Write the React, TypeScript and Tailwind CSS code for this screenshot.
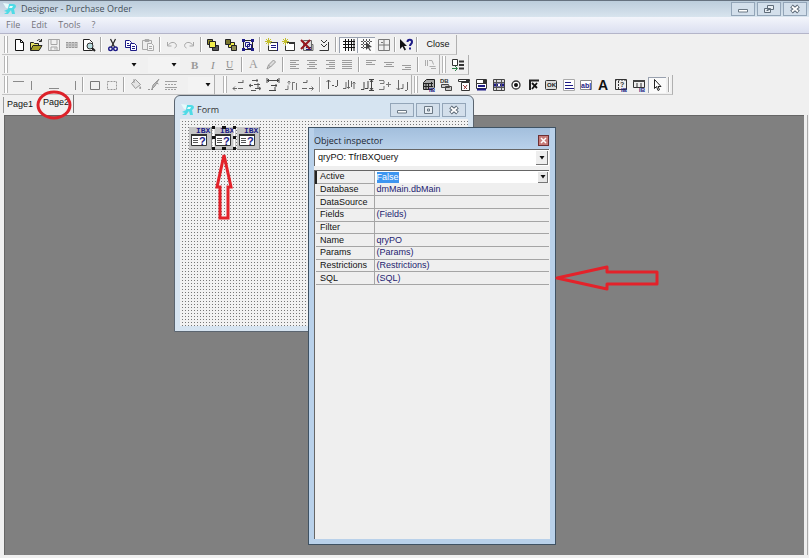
import { useState } from "react"
import type { ReactNode } from "react"
import clsx from "clsx"

const NAVY = "#1d1b86"

// every toolbar glyph is drawn on a 14x14 grid
const icons: Record<string, ReactNode> = {
  new: <path d="M3.5 1.5h5l3 3v8h-8z M8.5 1.5v3h3" fill="#fff" stroke="#111" />,
  open: (
    <>
      <path d="M1.5 12V4.5h3l1 1h4v2" fill="#e8e36a" stroke="#222" />
      <path d="M1.5 12.5l2.5-5h9l-3 5z" fill="#a8a12a" stroke="#222" />
      <path d="M8 3c1.500-2 3-1.500 4 0M12.500 1v2.500h-2.500" fill="none" stroke="#222" />
    </>
  ),
  save: <path d="M1.500 1.500h11v11h-11z M4 1.500v5h6v-5 M4 12.500v-3.500h6v3.500 M8 9.500v2" fill="none" stroke="#a5a5a5" />,
  print: (
    <>
      <path d="M1 4h12v6H1z" fill="#c4c4c4" />
      <path d="M1 4.500h12M1 7h12M1 9.500h12" stroke="#999" strokeDasharray="2 1" />
    </>
  ),
  preview: (
    <>
      <path d="M1.500 1.500h6l3 3v8h-9z" fill="#fff" stroke="#222" />
      <circle cx="8" cy="8" r="3" fill="#b9dde0" stroke="#333" />
      <path d="M10 10l3 3" stroke="#222" strokeWidth="2" />
    </>
  ),
  cut: (
    <>
      <path d="M4.500 1l4 8M9.500 1l-4 8" stroke="#222" strokeWidth="1.200" fill="none" />
      <circle cx="4.500" cy="10.800" r="1.800" fill="none" stroke={NAVY} strokeWidth="1.400" />
      <circle cx="9.500" cy="10.800" r="1.800" fill="none" stroke={NAVY} strokeWidth="1.400" />
    </>
  ),
  copy: (
    <>
      <path d="M1.500 2.500h4l2 2v5h-6z" fill="#fff" stroke={NAVY} />
      <path d="M3 5.500h2M3 7.500h3" stroke={NAVY} />
      <path d="M6.500 5.500h4l2 2v5h-6z" fill="#fff" stroke={NAVY} />
      <path d="M8 8.500h3M8 10.500h3" stroke={NAVY} />
    </>
  ),
  paste: (
    <>
      <path d="M1.500 2.500h9v9h-9z M4 1.500h4v2H4z" fill="#eee" stroke="#aaa" />
      <path d="M6.500 5.500h4l2 2v5h-6z M8 8.500h3M8 10.500h3" fill="#f4f4f4" stroke="#aaa" />
    </>
  ),
  undo: <path d="M2.500 4v4h4M3 7.500C5 4 9 3.500 11 6c1 2 0 3.500-1.500 4" fill="none" stroke="#a8a8a8" />,
  redo: <path d="M11.500 4v4h-4M11 7.500C9 4 5 3.500 3 6c-1 2 0 3.500 1.500 4" fill="none" stroke="#a8a8a8" />,
  front: (
    <>
      <path d="M6.500 7.500h6v5h-6z" fill="#555" stroke="#222" />
      <path d="M1.500 1.500h5v5h-5z" fill="#8e8b2c" stroke="#222" />
      <path d="M3.500 3.500h6v6h-6z" fill="#f3ef4c" stroke="#222" />
    </>
  ),
  back: (
    <>
      <path d="M4.500 4.500h6v5h-6z" fill="#f3ef4c" stroke="#222" />
      <path d="M1.500 1.500h5v5h-5z" fill="#77742c" stroke="#222" />
      <path d="M7.500 7.500h5v5h-5z" fill="#8f8c55" stroke="#222" />
    </>
  ),
  group: (
    <>
      <path d="M4.500 4.500h4v4h-4z M6.500 6.500h4v4h-4z" fill="none" stroke={NAVY} />
      <path d="M2.500 2.500h9v9h-9z" fill="none" stroke="#222" />
      <path d="M1 1h3v3H1z M10 1h3v3h-3z M1 10h3v3H1z M10 10h3v3h-3z" fill={NAVY} />
    </>
  ),
  addPage: (
    <>
      <path d="M5.500 4.500h7v8h-9v-5" fill="#fff" stroke="#333" />
      <path d="M6 7.500h5M6 9.500h5M12.500 4v9" stroke={NAVY} />
      <path d="M1 1l5 5M6 1l-5 5M3.500 0v7M0 3.500h7" stroke="#c2be2a" />
    </>
  ),
  addForm: (
    <>
      <path d="M4.500 4.500h8v8h-9v-5" fill="#fff" stroke="#333" />
      <path d="M7 4h6v2H7z" fill="#333" />
      <path d="M1 1l5 5M6 1l-5 5M3.500 0v7M0 3.500h7" stroke="#c2be2a" />
    </>
  ),
  deletePage: (
    <>
      <path d="M3.500 2.500h8v10h-8z M11 6.500h2v6h-6" fill="#ddd" stroke="#666" />
      <path d="M6 9.500h5M6 11.500h5" stroke={NAVY} />
      <path d="M1 2l9 9M10 2l-9 9" stroke="#97161f" strokeWidth="2" />
    </>
  ),
  options: <path d="M11.500 4v8.500h-9M4 2l3 3 3-3M4 6l3 3 3-3" fill="none" stroke="#333" />,
  grid: <path d="M1 3.500h12M1 6.500h12M1 9.500h12M3.500 1v12M6.500 1v12M9.500 1v12M12 1v12" stroke="#111" />,
  snap: (
    <>
      <path d="M1 3.500h11M1 6.500h8M1 9.500h6M3.500 1v10M6.500 1v9M9.500 1v6" stroke="#555" strokeDasharray="2 1" />
      <path d="M6 4l6 5-3 .5 2 3-1 .5-2-3-2 2z" fill="#444" />
    </>
  ),
  fit: <path d="M1.500 1.500h11v11h-11z M7 2v10M2 7h10M4 4.500h2" fill="none" stroke="#777" />,
  help: (
    <>
      <path d="M1 1v10l2.500-2.500 2 4 1.500-1-2-3.500h3z" fill="#111" />
      <path d="M8.500 4c0-3 4.500-3 4.500 0 0 2-2 2-2 4M11 9.500v2" fill="none" stroke={NAVY} strokeWidth="2" />
    </>
  ),
  bold: <text x="3" y="11" fontSize="11" fontWeight="700" fontFamily="Liberation Serif, serif" fill="#9a9a9a">B</text>,
  italic: <text x="5" y="11" fontSize="11" fontStyle="italic" fontFamily="Liberation Serif, serif" fill="#8e8e8e">I</text>,
  underline: <text x="3" y="10" fontSize="10" textDecoration="underline" fontFamily="Liberation Serif, serif" fill="#8e8e8e">U</text>,
  fontColor: <text x="2" y="10" fontSize="12" fontFamily="Liberation Serif, serif" fill="#9a9a9a">A</text>,
  pen: <path d="M3 11l1.500-4 5-5 2 2-5 5zM4.500 7l2 2" fill="#ddd" stroke="#999" />,
  alignLeft: <path d="M2 2.500h9M2 4.500h6M2 6.500h9M2 8.500h6M2 10.500h9" stroke="#9c9c9c" />,
  alignCenter: <path d="M2 2.500h10M4 4.500h6M2 6.500h10M4 8.500h6M2 10.500h10" stroke="#9c9c9c" />,
  alignRight: <path d="M3 2.500h9M6 4.500h6M3 6.500h9M6 8.500h6M3 10.500h9" stroke="#9c9c9c" />,
  justify: <path d="M2 2.500h10M2 4.500h10M2 6.500h10M2 8.500h10M2 10.500h10" stroke="#9c9c9c" />,
  top: <path d="M2 2.500h10M2 4.500h6M2 6.500h9" stroke="#9c9c9c" />,
  middle: <path d="M2 4.500h10M4 6.500h6M2 8.500h10" stroke="#9c9c9c" />,
  bottom: <path d="M3 7.500h9M6 9.500h6M3 11.500h9" stroke="#9c9c9c" />,
  rotate: <path d="M2.500 2v6M4.500 2v6M6 2.500h3l1.500 4M6.500 8.500h6M8 10.500h5" fill="none" stroke="#adadad" />,
  dataFields: (
    <>
      <path d="M1.500 1.500h5v6h-5z" fill="#fff" stroke="#333" />
      <path d="M8 3.500h5M8 7h5M8 10.500h5" stroke="#333" strokeWidth="2" />
      <path d="M1 10.500h5M4 8l2.500 2.500L4 13" fill="none" stroke="#2d7d46" />
    </>
  ),
  lineTop: <path d="M1 3.500h11" stroke="#8a8a8a" />,
  lineLeft: <path d="M2.500 3v9" stroke="#8a8a8a" />,
  lineBottom: <path d="M2 10.500h10" stroke="#8a8a8a" />,
  lineRight: <path d="M11.500 3v9" stroke="#8a8a8a" />,
  frame: <path d="M2.500 3.500h9v8h-9z" fill="none" stroke="#777" />,
  noFrame: <path d="M2.500 3.500h9v8h-9z" fill="none" stroke="#999" strokeDasharray="2 1" />,
  fill: (
    <>
      <path d="M2.500 5.500l4-4 5 5-5 4z M5 1v4" fill="#e4e4e4" stroke="#999" />
      <path d="M11 8c2 2 1 3 0 3s-1-1 0-3z" fill="#999" />
    </>
  ),
  brush: (
    <>
      <path d="M12 1l-4 7-3 3 1-4z M9.500 5l2 1" fill="#bbb" stroke="#999" />
      <path d="M1 11.500h2M4 11.500h2" stroke="#999" />
    </>
  ),
  lineStyle: (
    <>
      <path d="M1 3.500h12M1 9.500h12" stroke="#a0a0a0" />
      <path d="M1 6.500h12M1 11.500h12" stroke="#a0a0a0" strokeDasharray="2 1" />
    </>
  ),
  alLeft: <path d="M7 4.500h5M12 2v3M6 10.500H2M4 8.500l-2 2 2 2M7 10.500h5" fill="none" stroke="#666" />,
  alCenter: <path d="M4 2.500h6M9 1v3M1 7.500h4M3 6L1 7.500 3 9M6 6.500h6M10 5v5M12 10.500H7M11 9l2 1.500-2 1.500M3 12.500h5" fill="none" stroke="#555" />,
  alWidth: <path d="M1 2.500h12M1 0v5M13 0v5M3 1L1.500 2.500 3 4M11 1l1.500 1.500L11 4M5 7.500h6M10 6v3M3 12.500h7M9 9v3" fill="none" stroke="#444" />,
  alSpace: <path d="M1 11.500h3v-4M5 6.500V3M3.500 4.500L5 3l1.500 1.500M8.500 4v8M9 4.500h2M12.500 5v7" fill="none" stroke="#777" />,
  alRight: <path d="M2 4.500h4V2M1 10.500h5M8 10.500h4M10.500 8.500l2 2-2 2" fill="none" stroke="#666" />,
  alTop: <path d="M3.500 11V2M1.500 4l2-2 2 2M7 7.500h2M12.500 2v6M10 8.500h2" fill="none" stroke="#555" />,
  alMiddle: <path d="M1 10.500h3V4M6.500 2v8M5 9l1.500 1.500L8 9M9.500 3v6M12 11V4M10.500 5.500L12 4l1.500 1.500" fill="none" stroke="#666" />,
  alHeight: <path d="M1 11.500h3V4M5 10.500h3V3M9 1.500h5M9 12.500h5M11.500 2v10M10 4l1.500-2L13 4M10 10l1.500 2L13 10" fill="none" stroke="#444" />,
  alSpaceV: <path d="M1 2.500h5M2 5.500h4V3M1 11.500h5V8M8 6.500h5M10.500 4v5" fill="none" stroke="#777" />,
  alBottom: <path d="M3.500 2v10M1.500 10l2 2 2-2M6 10.500h2V6M12.500 4v8M10 12.500h2" fill="none" stroke="#666" />,
  ibData: (
    <>
      <path d="M1.500 4.500l3-3h8v8l-2 2h-9z" fill="#aaa" stroke="#222" />
      <path d="M2 5.500h9M4 5v7M6.500 5v7M2 8.500h9M9.500 4v5" stroke="#222" />
      <text x="7" y="14" fontSize="6" fontWeight="700" fill={NAVY}>IB</text>
    </>
  ),
  dbImage: (
    <>
      <text x="1" y="5" fontSize="6" fontWeight="700" fill="#333">DB</text>
      <path d="M2.500 6.500h7l1 3h-8z M6.500 8.500h6v4h-6z" fill="#ccc" stroke="#444" />
    </>
  ),
  lookup: (
    <>
      <path d="M1.500 1.500h11v2h-11z M4.500 4.500h8v8h-8z" fill="#fff" stroke="#333" />
      <path d="M9 2h3v2H9z" fill="#333" />
      <path d="M6 7l4 4M10 7l-3 4" stroke="#963a3a" />
    </>
  ),
  combo: (
    <>
      <path d="M2.500 1.500h10v4h-10z M2.500 5.500h10v5h-10z" fill="#fff" stroke="#333" />
      <path d="M9 2h3v3H9z" fill="#333" />
      <path d="M4 8h7M3 11.500h9" stroke={NAVY} strokeWidth="2" />
    </>
  ),
  dbGrid: (
    <>
      <path d="M1.500 1.500h11v11h-11z" fill="#ddd" stroke="#444" />
      <path d="M2 7h10" stroke={NAVY} strokeWidth="3" />
      <path d="M4.500 2v10M9.500 2v10M2 4.500h10M2 9.500h10" stroke="#555" />
      <path d="M6 6h2v2H6z" fill="#fff" />
    </>
  ),
  radio: (
    <>
      <circle cx="7" cy="7" r="4" fill="#fff" stroke="#333" strokeWidth="1.300" />
      <circle cx="7" cy="7" r="2" fill="#111" />
    </>
  ),
  check: (
    <>
      <path d="M3 12V2.500h9" fill="none" stroke="#222" strokeWidth="2" />
      <path d="M5 5l5 5M10 5l-5 6" stroke="#111" strokeWidth="1.800" />
    </>
  ),
  okButton: (
    <>
      <rect x="1.500" y="2.500" width="11" height="9" rx="1" fill="#ddd" stroke="#333" />
      <text x="3" y="9" fontSize="6" fontWeight="700" fill="#222">OK</text>
    </>
  ),
  memo: (
    <>
      <path d="M1.500 1.500h11v11h-11z" fill="#fff" stroke="#aaa" />
      <path d="M3 4.500h6M3 7.500h8M3 10.500h9" stroke={NAVY} />
    </>
  ),
  edit: (
    <>
      <path d="M1.500 2.500h11v9h-11z" fill="#fff" stroke="#888" />
      <text x="2" y="10" fontSize="7" fontWeight="700" fill={NAVY}>ab|</text>
    </>
  ),
  label: <text x="1" y="12" fontSize="14" fontWeight="700" fontFamily="Liberation Sans, sans-serif" fill="#111">A</text>,
  ibQuery: (
    <>
      <path d="M1.500 1.500h11v10h-11z" fill="#eee" stroke="#333" />
      <path d="M1 2h12M4.500 3v8" stroke="#333" strokeDasharray="2 1" />
      <text x="6" y="9" fontSize="7" fontWeight="700" fill="#333">?</text>
      <text x="7" y="14" fontSize="6" fontWeight="700" fill={NAVY}>IB</text>
    </>
  ),
  ibTable: (
    <>
      <path d="M1.500 2.500h11v7h-11z" fill="#eee" stroke="#333" />
      <path d="M1 3h12" stroke="#444" strokeWidth="2" />
      <path d="M5 5v4M9 5v4" stroke="#333" />
      <text x="7" y="14" fontSize="6" fontWeight="700" fill={NAVY}>IB</text>
    </>
  ),
  pointer: <path d="M4.500 1.500v9l2-2 1.500 4 1.500-.8-1.500-3.200h3z" fill="#fff" stroke="#222" />,
}

function Tools({ names, className, pressed = [] }: { names: string[]; className: string; pressed?: string[] }) {
  return (
    <div className={clsx("flex h-4 shrink-0", className)}>
      {names.map((name) => (
        <button
          key={name}
          aria-label={name}
          className={clsx(
            "flex min-w-0 flex-1 items-center justify-center",
            pressed.includes(name) && "border-t border-l border-gray-400 bg-[#fafafa]"
          )}
        >
          <svg viewBox="0 0 14 14" className="h-3.5 w-3.5 shrink-0">{icons[name]}</svg>
        </button>
      ))}
    </div>
  )
}

function Sep() {
  return <span className="mx-[2px] h-[15px] w-[2px] shrink-0 border-l border-[#a5a5a5] bg-white" />
}

function Bar({ children, className }: { children: ReactNode; className?: string }) {
  return (
    <div className={clsx("flex h-5 shrink-0 items-center border-r border-b border-r-[#b0b0b0] border-b-[#c4c4c4]", className ?? "pl-[2px]")}>
      <span className="mr-[2px] h-[17px] w-1 shrink-0 border-x border-[#b5b5b5] bg-white" />
      {children}
    </div>
  )
}

function Drop({ label, className }: { label: string; className: string }) {
  return (
    <div className={clsx("relative h-4 shrink-0 bg-[#f3f3f3]", className)}>
      <select aria-label={label} className="h-full w-full appearance-none outline-none" />
      <Caret className="pointer-events-none absolute top-1.5 right-[3px]" />
    </div>
  )
}

function Caret({ className }: { className?: string }) {
  return (
    <svg viewBox="0 0 6 4" className={clsx("h-1 w-1.5", className)}>
      <path d="M0.500 0h5L3 3.500z" fill="#111" />
    </svg>
  )
}

function Logo() {
  return (
    <svg viewBox="0 0 14 14" className="h-3.5 w-3.5 shrink-0">
      <path d="M0 1l7 1-2 4H3z" fill="#e6fafb" />
      <path d="M6 2h4c4 0 3.500 4 1 5l1 5H9L8 8l-3 4H1l3-2-3-1 4-2z" fill="#4fdbe6" />
      <path d="M7 4h3l-1 2H6z" fill="#e8fbfc" />
    </svg>
  )
}

function WindowButtons({ restore = false }: { restore?: boolean }) {
  const button = "flex h-[14px] w-6 items-center justify-center border border-[#93a5b8] bg-[#d3dfeb]"
  return (
    <div className="flex gap-[2px]">
      <button aria-label="Minimize" className={button}>
        <svg viewBox="0 0 12 10" className="h-2.5 w-3">
          <path d="M1.500 5.500h9v2.500h-9z" fill="#fff" stroke="#6b7885" />
        </svg>
      </button>
      <button aria-label={restore ? "Restore" : "Maximize"} className={button}>
        <svg viewBox="0 0 12 10" className="h-2.5 w-3">
          {restore ? (
            <path d="M4.500 1.500h6v4h-6z M1.500 4.500h6v4h-6z M3.500 6.500h2" fill="#e8eef4" stroke="#5f6c79" />
          ) : (
            <path d="M2.500 1.500h8v7h-8z M5.500 4h2v2h-2z" fill="#e8eef4" stroke="#6b7885" />
          )}
        </svg>
      </button>
      <button aria-label="Close window" className={button}>
        <svg viewBox="0 0 12 10" className="h-2.5 w-3">
          <path d="M2.500 2l7 6M9.500 2l-7 6" stroke="#5f6c79" strokeWidth="4" />
          <path d="M3 2.500l6 5M9 2.500l-6 5" stroke="#fff" strokeWidth="1.800" />
        </svg>
      </button>
    </div>
  )
}

function QueryComponent({ selected = false }: { selected?: boolean }) {
  return (
    <button aria-label="IBX query" className="h-6 w-6">
      <svg viewBox="0 0 24 24" className="h-6 w-6">
        <path d="M1 1h22v22H1z" fill="#c6c6c6" />
        <path d="M1 23.500h22.500V1" fill="none" stroke="#888" />
        <text x="8" y="7" fontSize="8" fontWeight="700" fontFamily="Liberation Mono, monospace" fill={NAVY}>IBX</text>
        <path d="M3.500 8.500h15v11h-15z" fill="#fff" stroke="#333" />
        <path d="M3 9h16" stroke="#333" strokeWidth="2" />
        <path d="M5 12.500h5M5 14.500h5M5 16.500h5" stroke="#555" />
        <text x="11" y="19" fontSize="11" fontWeight="700" fontFamily="Liberation Sans, sans-serif" fill={NAVY}>?</text>
        {selected && (
          <>
            <path d="M1.500 2v20M22.500 2v20" stroke="#fff" strokeWidth="2" />
            <path d="M0 0h3v3H0z M10 0h4v3h-4z M21 0h3v3h-3z M0 10h3v3H0z M21 10h3v3h-3z M0 21h3v3H0z M10 21h4v3h-4z M21 21h3v3h-3z" fill="#111" />
          </>
        )}
      </svg>
    </button>
  )
}

const properties = [
  ["Database", "dmMain.dbMain"],
  ["DataSource", ""],
  ["Fields", "(Fields)"],
  ["Filter", ""],
  ["Name", "qryPO"],
  ["Params", "(Params)"],
  ["Restrictions", "(Restrictions)"],
  ["SQL", "(SQL)"],
]

function FormWindow() {
  return (
    <section className="absolute top-[95px] left-[174px] flex h-[237px] w-[300px] flex-col rounded-t-md border border-[#5b6570] bg-[#d6e4f1] px-[5px] pb-[5px]">
      <header className="flex h-[23px] items-center gap-[2px] pt-1 pr-[2px] pl-[1px] font-['Open_Sans',sans-serif] text-[9px] text-[#333]">
        <Logo />
        <h2 className="flex-1">Form</h2>
        <WindowButtons />
      </header>
      <div className="flex flex-1 items-start bg-[#f2f2f2] bg-[linear-gradient(90deg,#f2f2f2_2px,transparent_2px),linear-gradient(#f2f2f2_2px,#777_2px)] bg-[size:3px_3px] pt-[7px] pl-2">
        <QueryComponent />
        <QueryComponent selected />
        <QueryComponent />
      </div>
    </section>
  )
}

function Inspector() {
  const [active, setActive] = useState("False")
  return (
    <section className="absolute top-[127px] left-[308px] flex h-[418px] w-[248px] flex-col border border-[#3f5263] bg-[#b9d1ea] px-[5px] pb-[5px]">
      <header className="flex h-[21px] items-center justify-between bg-linear-to-b from-[#a3bfdd] to-[#b9d1ea] pt-1 pr-[1px] font-['Open_Sans',sans-serif] text-[9px] text-[#1c2733]">
        <h2>Object inspector</h2>
        <button aria-label="Close inspector" className="flex h-[11px] w-[11px] items-center justify-center border border-[#6d2f33] bg-[#c77b78]">
          <svg viewBox="0 0 7 7" className="h-[7px] w-[7px]">
            <path d="M1 1l5 5M6 1L1 6" stroke="#fff" strokeWidth="1.500" />
          </svg>
        </button>
      </header>
      <div className="flex flex-1 flex-col bg-[#efefef] pr-[1px]">
        <div className="relative h-[17px] border-t border-l border-[#666] bg-white">
          <select aria-label="Component" className="h-full w-full appearance-none pl-[3px] outline-none">
            <option>qryPO: TfrIBXQuery</option>
          </select>
          <span className="pointer-events-none absolute top-[1px] right-[1px] flex h-[14px] w-3 items-center justify-center border-r border-b border-[#777] bg-[#eee]">
            <Caret />
          </span>
        </div>
        <div className="mt-1 flex-1 border-t border-l border-[#666]">
          <table className="h-[114px] w-full table-fixed border-collapse text-left leading-[11px]">
            <tbody>
              <tr>
                <th scope="row" className="w-[58px] border-r border-b border-[#a5a5a5] border-l-2 border-l-[#222] p-0 pl-[3px] font-normal">
                  <label htmlFor="active">Active</label>
                </th>
                <td className="bg-white p-0 pl-[2px]">
                  <div className="relative h-[11px]">
                    <span className="pointer-events-none block w-fit bg-[#3d95f0] text-white">{active}</span>
                    <select
                      id="active"
                      value={active}
                      onChange={(e) => setActive(e.target.value)}
                      className="absolute inset-0 w-full appearance-none opacity-0"
                    >
                      <option>False</option>
                      <option>True</option>
                    </select>
                    <span className="pointer-events-none absolute top-0 right-[1px] flex h-[11px] w-2.5 items-center justify-center border-r border-b border-[#777] bg-[#e8e8e8]">
                      <Caret />
                    </span>
                  </div>
                </td>
              </tr>
              {properties.map(([name, value]) => (
                <tr key={name} className="border-b border-[#a5a5a5]">
                  <th scope="row" className="border-r border-[#a5a5a5] p-0 pl-1 font-normal">{name}</th>
                  <td className="p-0 pl-[2px] text-[#1d1b70]">{value}</td>
                </tr>
              ))}
            </tbody>
          </table>
        </div>
      </div>
    </section>
  )
}

export default function App() {
  return (
    <div className="relative flex min-h-screen flex-col overflow-hidden bg-[#f0f0f0] font-['Liberation_Sans',sans-serif] text-[9px] text-[#111]">
      <header className="flex h-[17px] items-center gap-1 border-t border-[#667280] bg-linear-to-b from-[#bccddc] to-[#d8e4ee] pr-[2px] pl-[3px] font-['Open_Sans',sans-serif] text-[#444f5a]">
        <Logo />
        <h1 className="flex-1">Designer - Purchase Order</h1>
        <WindowButtons restore />
      </header>
      <nav className="flex h-[17px] items-center gap-[11px] border-b border-[#b4b5c9] bg-linear-to-b from-[#f3f5fb] to-[#dbdff0] pl-1.5 font-['Open_Sans',sans-serif] text-[#74747c]">
        <button>File</button>
        <button>Edit</button>
        <button>Tools</button>
        <button>?</button>
      </nav>

      {/* Toolbars */}
      <div className="flex flex-col pt-[1px] pl-[2px]">
        <div className="flex">
          <Bar>
            <Tools className="w-[88px]" names={["new", "open", "save", "print", "preview"]} />
            <Sep />
            <Tools className="w-[53px]" names={["cut", "copy", "paste"]} />
            <Sep />
            <Tools className="w-[35px]" names={["undo", "redo"]} />
            <Sep />
            <Tools className="w-[53px]" names={["front", "back", "group"]} />
            <Sep />
            <Tools className="w-[70px]" names={["addPage", "addForm", "deletePage", "options"]} />
            <Sep />
            <Tools className="w-[53px]" names={["grid", "snap", "fit"]} pressed={["grid", "snap"]} />
            <Sep />
            <Tools className="w-4" names={["help"]} />
            <Sep />
            <button className="w-9">Close</button>
          </Bar>
        </div>
        <div className="flex">
          <Bar>
            <Drop label="Font" className="mr-2 w-[130px]" />
            <Drop label="Size" className="mr-1.5 w-8" />
            <Tools className="w-[53px]" names={["bold", "italic", "underline"]} />
            <Sep />
            <Tools className="w-[35px]" names={["fontColor", "pen"]} />
            <Sep />
            <Tools className="w-[70px]" names={["alignLeft", "alignCenter", "alignRight", "justify"]} />
            <Sep />
            <Tools className="w-[53px]" names={["top", "middle", "bottom"]} />
            <Sep />
            <Tools className="w-[18px]" names={["rotate"]} />
          </Bar>
          <Bar>
            <Tools className="w-5" names={["dataFields"]} />
          </Bar>
        </div>
        <div className="flex">
          <Bar>
            <Tools className="w-[70px]" names={["lineTop", "lineLeft", "lineBottom", "lineRight"]} />
            <Sep />
            <Tools className="w-[35px]" names={["frame", "noFrame"]} />
            <Sep />
            <Tools className="w-[53px]" names={["fill", "brush", "lineStyle"]} />
            <Drop label="Line width" className="ml-2 w-[26px]" />
          </Bar>
          <Bar className="pl-2">
            <Tools className="w-[88px]" names={["alLeft", "alCenter", "alWidth", "alSpace", "alRight"]} />
            <Sep />
            <Tools className="w-[88px]" names={["alTop", "alMiddle", "alHeight", "alSpaceV", "alBottom"]} />
          </Bar>
          <Bar>
            <Tools
              className="w-[246px]"
              names={["ibData", "dbImage", "lookup", "combo", "dbGrid", "radio", "check", "okButton", "memo", "edit", "label", "ibQuery", "ibTable", "pointer"]}
              pressed={["pointer"]}
            />
            <Sep />
          </Bar>
        </div>
      </div>

      {/* Page tabs */}
      <div role="tablist" className="flex h-5 items-start pl-[3px]">
        <button role="tab" aria-selected="false" className="mt-[2px] h-4 border-l border-[#999] px-[3px]">Page1</button>
        <button role="tab" aria-selected="true" className="h-[18px] border-r border-[#777] pr-1 pl-[7px] pb-[2px]">Page2</button>
      </div>

      <main className="mr-[5px] mb-[3px] ml-1 flex-1 border-t border-l border-[#666] bg-[#808080] shadow-[3px_0_0_#efefef,4px_0_0_#aaa]" />

      <FormWindow />
      <Inspector />

      {/* Red callouts */}
      <svg viewBox="0 0 38 30" className="pointer-events-none absolute top-[90px] left-[35px] h-[30px] w-[38px]">
        <ellipse cx="19" cy="15" rx="16" ry="13" fill="none" stroke="#dd222a" strokeWidth="3" />
      </svg>
      <svg viewBox="0 0 20 70" className="pointer-events-none absolute top-[151px] left-[214px] h-[70px] w-5">
        <path d="M10 4l7 32h-3v31H6V36H3z" fill="none" stroke="#e3222a" strokeWidth="3" />
      </svg>
      <svg viewBox="0 0 106 30" className="pointer-events-none absolute top-[263px] left-[554px] h-[30px] w-[106px]">
        <path d="M3 15L53 4v5h50v12H53v5z" fill="none" stroke="#e3222a" strokeWidth="3" strokeLinejoin="round" />
      </svg>
    </div>
  )
}
